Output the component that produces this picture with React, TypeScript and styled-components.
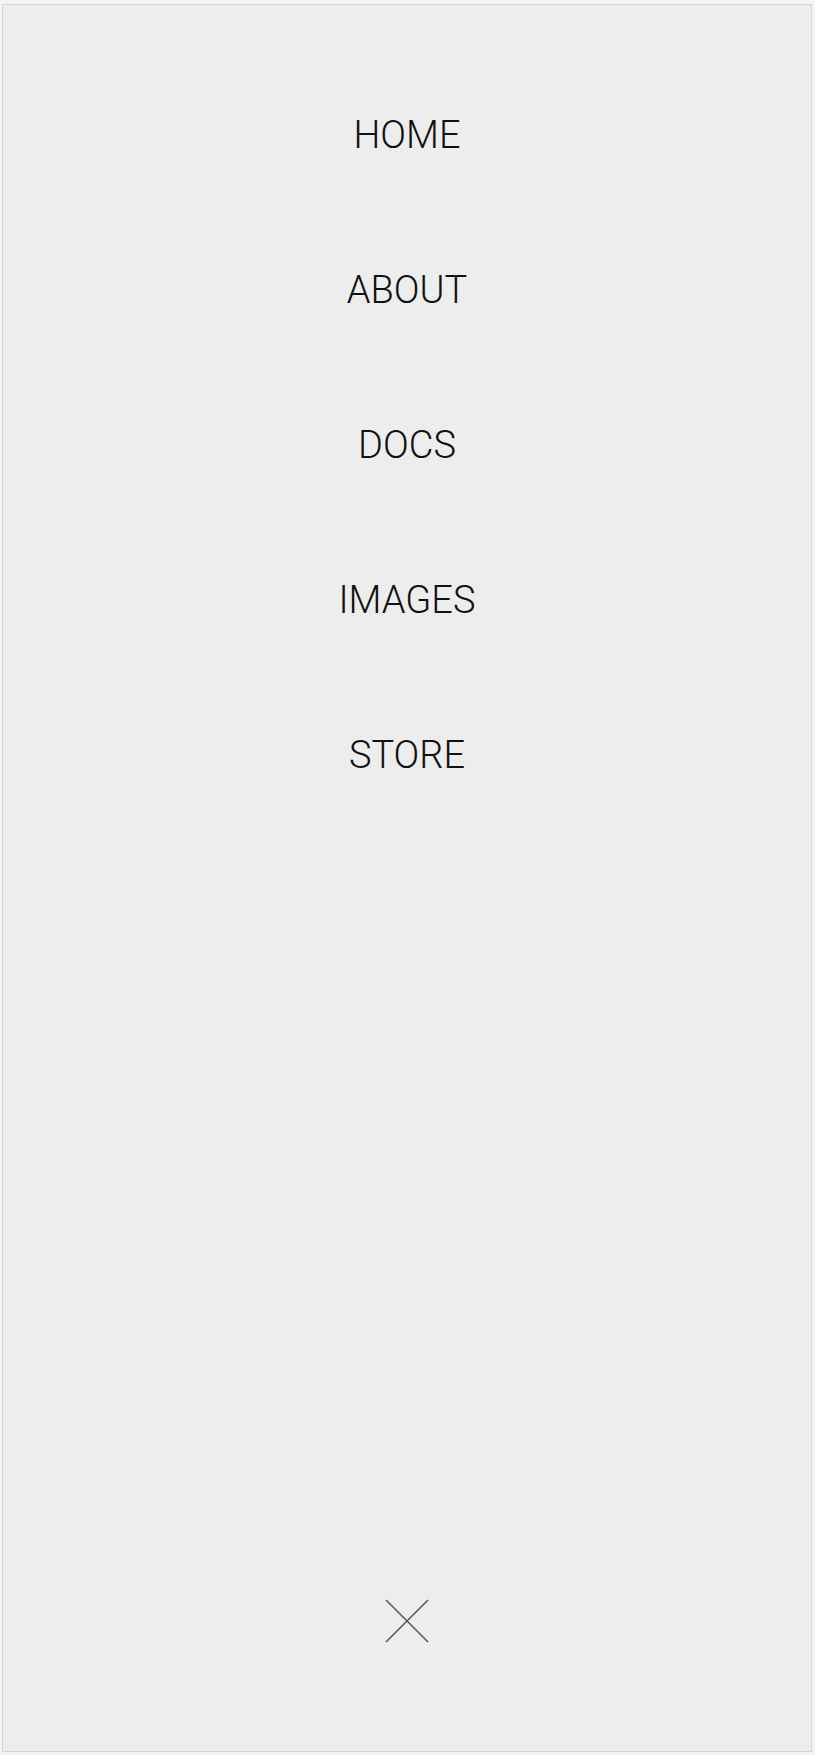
import React from "react";
import styled, { createGlobalStyle } from "styled-components";

const Global = createGlobalStyle`
  html, body { margin: 0; padding: 0; background: #f4f4f4; }
  body { font-family: "Liberation Sans", Arial, sans-serif; }
`;

const Panel = styled.div`
  box-sizing: border-box;
  margin: 4px 3px 3px 2px;
  height: 1748px;
  background: #ededed;
  border: 1px solid #d6d6d6;
  display: flex;
  flex-direction: column;
  align-items: center;
`;

const Nav = styled.nav`
  display: flex;
  flex-direction: column;
  align-items: center;
  padding-top: 52px;
`;

const NavLink = styled.a`
  display: flex;
  align-items: center;
  justify-content: center;
  height: 155px;
  font-family: "Roboto", "Liberation Sans", Arial, sans-serif;
  font-weight: 300;
  font-size: 38px;
  color: #111;
  text-decoration: none;
  letter-spacing: 0;
`;

const Close = styled.button`
  margin-top: auto;
  margin-bottom: 108px;
  width: 44px;
  height: 44px;
  padding: 0;
  border: 0;
  background: transparent;
  display: flex;
  align-items: center;
  justify-content: center;
`;

const items = ["HOME", "ABOUT", "DOCS", "IMAGES", "STORE"];

export default function App() {
  return (
    <>
      <Global />
      <Panel>
        <Nav>
          {items.map((t) => (
            <NavLink key={t} href="#">
              {t}
            </NavLink>
          ))}
        </Nav>
        <Close aria-label="Close">
          <svg width="44" height="44" viewBox="0 0 44 44">
            <path d="M1 1 L43 43 M43 1 L1 43" stroke="#555" strokeWidth="1.5" fill="none" />
          </svg>
        </Close>
      </Panel>
    </>
  );
}
